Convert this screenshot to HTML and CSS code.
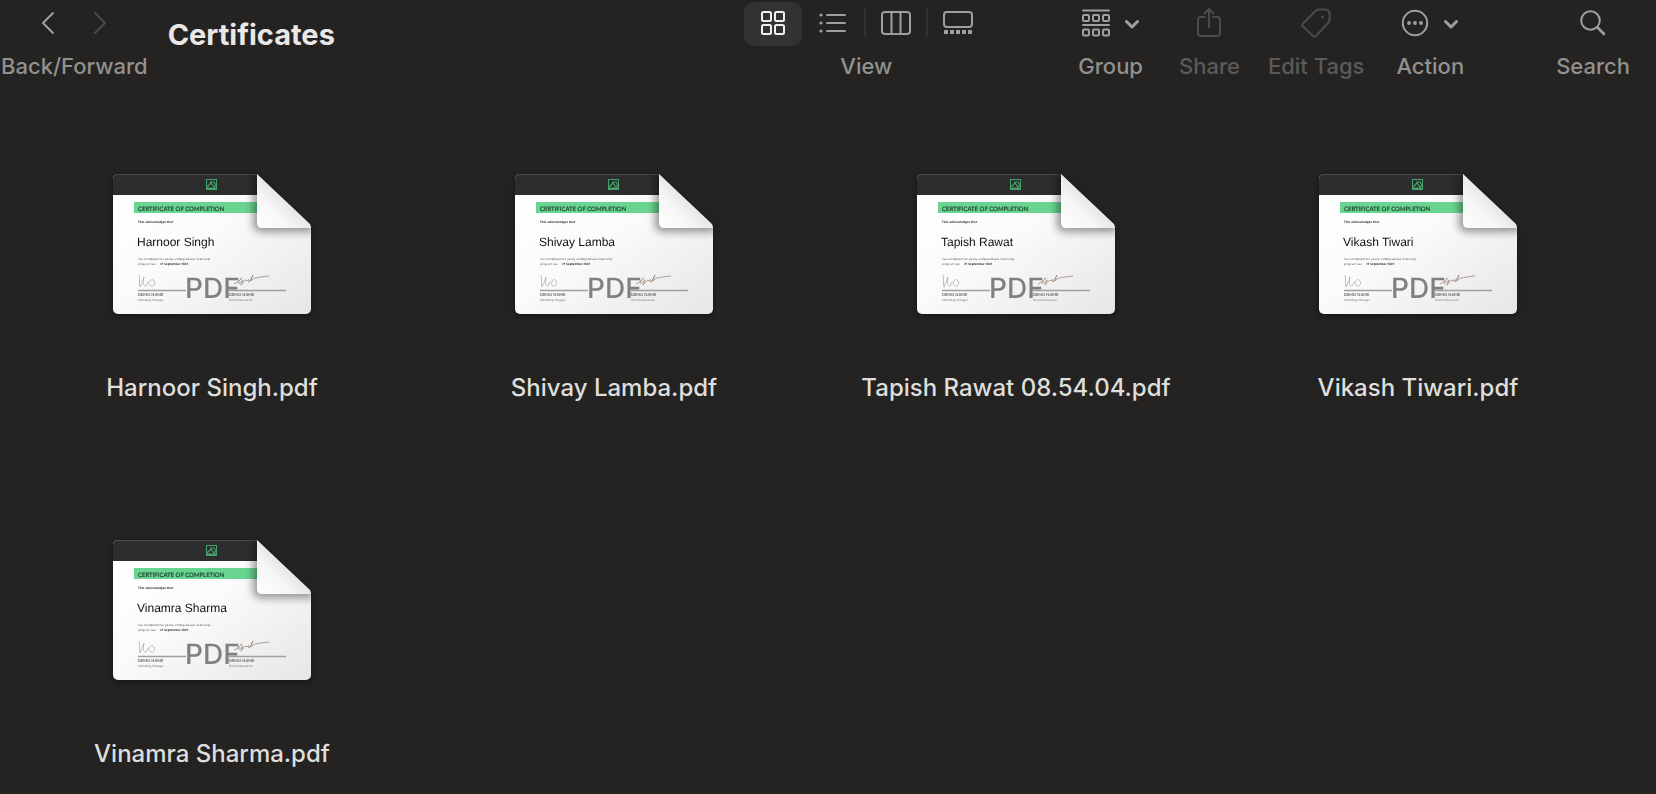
FILE: index.html
```
<!DOCTYPE html>
<html lang="en">
<head>
<meta charset="utf-8">
<title>Certificates</title>
<link rel="stylesheet" href="styles.css">
</head>
<body>
<svg class="defs" aria-hidden="true">
  <defs>
    <linearGradient id="paper" x1="0" y1="0" x2="1" y2="1"><stop offset="0" stop-color="#fff"/><stop offset=".45" stop-color="#fbfbfb"/><stop offset="1" stop-color="#e6e6e6"/></linearGradient>
    <linearGradient id="fold" x1="0" y1="1" x2=".55" y2=".45"><stop offset="0" stop-color="#fff"/><stop offset=".6" stop-color="#f6f6f6"/><stop offset="1" stop-color="#e4e4e4"/></linearGradient>
    <filter id="soft" x="-30%" y="-30%" width="160%" height="160%"><feGaussianBlur stdDeviation="4"/></filter>
    <clipPath id="sheet-clip"><path d="M5 0H144L198 54V135a5 5 0 0 1-5 5H5a5 5 0 0 1-5-5V5a5 5 0 0 1 5-5Z"/></clipPath>
    <symbol id="sheet" viewBox="0 0 198 140">
      <g clip-path="url(#sheet-clip)">
        <rect width="198" height="140" fill="url(#paper)"/>
        <rect width="198" height="21" fill="#2d2d2e"/>
        <rect width="198" height="1" fill="#4a4b48"/>
        <rect x="21" y="28" width="140" height="11" fill="#6ad591"/>
        <g fill="none" stroke="#45a06b"><rect x="93.500" y="5.500" width="10" height="10"/><path d="M94 13l4-4 3 4 2-2M97 8h4l2 3" stroke-width="1.200"/></g>
        <path d="M94 14.500h9" stroke="#45a06b" stroke-width="2"/>
        <path d="M25 116.500H73M116 116.500H173" stroke="#a0a0a0" stroke-width="1.500"/>
        <path d="M26 101c1 4 0 8 1 12 1-3 3-6 4-10-1 4-1 8 1 9s2-3 3-4 1 3 3 4 5-2 3-5-4-1-4 1" fill="none" stroke="#999" stroke-width=".6"/>
        <path d="M121 110c3-1 7-5 8-6s-5 4-4 5 4-2 5-3-3 6-2 5 4-5 5-5 0 2 2 0 0 3 1 2 4-7 4-7-3 7-2 6 3-3 4-3 4-1 14-2" fill="none" stroke="#8b776a" stroke-width=".7"/>
        <path d="M140 0H200V58H148q-8 0-8-8Z" fill="#000" opacity=".4" filter="url(#soft)"/>
      </g>
      <path d="M144 0L197 50Q198 52 198 54H149q-5 0-5-5Z" fill="url(#fold)"/>
    </symbol>
  </defs>
</svg>

<header class="toolbar">
  <div class="tool nav">
    <div class="controls">
      <button type="button" aria-label="Back"><svg width="16" height="26" viewBox="0 0 16 26"><path d="M13 3L3 13l10 10" stroke-width="2"/></svg></button>
      <button type="button" class="off" aria-label="Forward"><svg width="16" height="26" viewBox="0 0 16 26"><path d="M3 3l10 10L3 23" stroke-width="2"/></svg></button>
    </div>
    <span class="caption">Back/Forward</span>
  </div>
  <h1>Certificates</h1>
  <div class="tool view">
    <div class="segments">
      <button type="button" class="selected" aria-label="Icons"><svg width="24" height="24" viewBox="0 0 24 24"><rect x="1" y="1" width="9" height="9" rx="1.500"/><rect x="14" y="1" width="9" height="9" rx="1.500"/><rect x="1" y="14" width="9" height="9" rx="1.500"/><rect x="14" y="14" width="9" height="9" rx="1.500"/></svg></button>
      <button type="button" aria-label="List"><svg width="28" height="24" viewBox="0 0 28 24"><path d="M8 4h18M8 12h18M8 20h18"/><g class="solid"><circle cx="2" cy="4" r="1.600"/><circle cx="2" cy="12" r="1.600"/><circle cx="2" cy="20" r="1.600"/></g></svg></button>
      <button type="button" aria-label="Columns"><svg width="30" height="24" viewBox="0 0 30 24"><rect x="1" y="1" width="28" height="22" rx="3"/><path d="M10.500 1v22M19.500 1v22"/></svg></button>
      <button type="button" aria-label="Gallery"><svg width="30" height="24" viewBox="0 0 30 24"><rect x="1" y="1" width="28" height="15" rx="3"/><path class="solid" d="M1 19h4v4H1zM7 19h4v4H7zM13 19h4v4h-4zM19 19h4v4h-4zM25 19h4v4h-4z"/></svg></button>
    </div>
    <span class="caption">View</span>
  </div>
  <div class="actions">
    <button type="button" class="tool group">
      <span class="controls menu"><svg width="28" height="28" viewBox="0 0 28 28"><path d="M1 1.500h26M1 16h26"/><g><rect x="1" y="6" width="6" height="6" rx="1"/><rect x="11" y="6" width="6" height="6" rx="1"/><rect x="21" y="6" width="6" height="6" rx="1"/><rect x="1" y="20.500" width="6" height="6" rx="1"/><rect x="11" y="20.500" width="6" height="6" rx="1"/><rect x="21" y="20.500" width="6" height="6" rx="1"/></g></svg><svg class="chevron" width="16" height="12" viewBox="0 0 16 12"><path d="M2.500 4.500L8 10l5.500-5.500" stroke-width="3"/></svg></span>
      <span class="caption">Group</span>
    </button>
    <button type="button" class="tool off" disabled>
      <span class="controls"><svg width="24" height="32" viewBox="0 0 24 32"><path d="M8 10H4a3 3 0 0 0-3 3v13a3 3 0 0 0 3 3h16a3 3 0 0 0 3-3V13a3 3 0 0 0-3-3h-4M12 20V2M7.500 6.500L12 2l4.500 4.500"/></svg></span>
      <span class="caption">Share</span>
    </button>
    <button type="button" class="tool off" disabled>
      <span class="controls"><svg width="30" height="30" viewBox="0 0 30 30"><path d="M17.500 1.500H25q3.500 1 3.500 4V12q0 1.500-1 2.500L15 28q-1.500 1.500-3 0L2 18.500q-1.500-1.500 0-3L15 2.500q1-1 2.500-1Z"/><circle class="solid" cx="21.500" cy="9" r="1.500"/></svg></span>
      <span class="caption">Edit Tags</span>
    </button>
    <button type="button" class="tool action">
      <span class="controls menu"><svg width="28" height="28" viewBox="0 0 28 28"><circle cx="14" cy="14" r="12.200"/><g class="solid"><circle cx="8" cy="14" r="1.900"/><circle cx="14" cy="14" r="1.900"/><circle cx="20" cy="14" r="1.900"/></g></svg><svg class="chevron" width="16" height="12" viewBox="0 0 16 12"><path d="M2.500 4.500L8 10l5.500-5.500" stroke-width="3"/></svg></span>
      <span class="caption">Action</span>
    </button>
    <button type="button" class="tool search">
      <span class="controls"><svg width="26" height="26" viewBox="0 0 26 26"><circle cx="10.500" cy="10.500" r="9.300"/><path d="M17.500 17.500l6.500 6.500" stroke-width="2.600"/></svg></span>
      <span class="caption">Search</span>
    </button>
  </div>
</header>

<main class="files">
  <figure class="file">
    <svg class="thumb" viewBox="0 0 198 140" width="198" height="140">
      <use href="#sheet"/>
      <text class="heading" x="25" y="37">CERTIFICATE OF COMPLETION</text><text class="fine strong" x="25" y="49">This acknowledges that</text>
      <text class="name" x="24" y="72">Harnoor Singh</text>
      <text class="fine" x="25" y="86">has completed our yearly undergraduate internship</text><text class="fine" x="25" y="91">program last</text><text class="fine strong" x="47" y="91">21 September 2022</text>
      <text class="sign" x="25" y="122">DEMO NAME</text><text class="role" x="25" y="127">Marketing Manager</text>
      <text class="sign" x="116" y="122">DEMO NAME</text><text class="role" x="116" y="127">Human Resources</text>
      <text class="kind" x="72" y="124">PDF</text>
    </svg>
    <figcaption>Harnoor Singh.pdf</figcaption>
  </figure>
  <figure class="file">
    <svg class="thumb" viewBox="0 0 198 140" width="198" height="140">
      <use href="#sheet"/>
      <text class="heading" x="25" y="37">CERTIFICATE OF COMPLETION</text><text class="fine strong" x="25" y="49">This acknowledges that</text>
      <text class="name" x="24" y="72">Shivay Lamba</text>
      <text class="fine" x="25" y="86">has completed our yearly undergraduate internship</text><text class="fine" x="25" y="91">program last</text><text class="fine strong" x="47" y="91">21 September 2022</text>
      <text class="sign" x="25" y="122">DEMO NAME</text><text class="role" x="25" y="127">Marketing Manager</text>
      <text class="sign" x="116" y="122">DEMO NAME</text><text class="role" x="116" y="127">Human Resources</text>
      <text class="kind" x="72" y="124">PDF</text>
    </svg>
    <figcaption>Shivay Lamba.pdf</figcaption>
  </figure>
  <figure class="file">
    <svg class="thumb" viewBox="0 0 198 140" width="198" height="140">
      <use href="#sheet"/>
      <text class="heading" x="25" y="37">CERTIFICATE OF COMPLETION</text><text class="fine strong" x="25" y="49">This acknowledges that</text>
      <text class="name" x="24" y="72">Tapish Rawat</text>
      <text class="fine" x="25" y="86">has completed our yearly undergraduate internship</text><text class="fine" x="25" y="91">program last</text><text class="fine strong" x="47" y="91">21 September 2022</text>
      <text class="sign" x="25" y="122">DEMO NAME</text><text class="role" x="25" y="127">Marketing Manager</text>
      <text class="sign" x="116" y="122">DEMO NAME</text><text class="role" x="116" y="127">Human Resources</text>
      <text class="kind" x="72" y="124">PDF</text>
    </svg>
    <figcaption>Tapish Rawat 08.54.04.pdf</figcaption>
  </figure>
  <figure class="file">
    <svg class="thumb" viewBox="0 0 198 140" width="198" height="140">
      <use href="#sheet"/>
      <text class="heading" x="25" y="37">CERTIFICATE OF COMPLETION</text><text class="fine strong" x="25" y="49">This acknowledges that</text>
      <text class="name" x="24" y="72">Vikash Tiwari</text>
      <text class="fine" x="25" y="86">has completed our yearly undergraduate internship</text><text class="fine" x="25" y="91">program last</text><text class="fine strong" x="47" y="91">21 September 2022</text>
      <text class="sign" x="25" y="122">DEMO NAME</text><text class="role" x="25" y="127">Marketing Manager</text>
      <text class="sign" x="116" y="122">DEMO NAME</text><text class="role" x="116" y="127">Human Resources</text>
      <text class="kind" x="72" y="124">PDF</text>
    </svg>
    <figcaption>Vikash Tiwari.pdf</figcaption>
  </figure>
  <figure class="file">
    <svg class="thumb" viewBox="0 0 198 140" width="198" height="140">
      <use href="#sheet"/>
      <text class="heading" x="25" y="37">CERTIFICATE OF COMPLETION</text><text class="fine strong" x="25" y="49">This acknowledges that</text>
      <text class="name" x="24" y="72">Vinamra Sharma</text>
      <text class="fine" x="25" y="86">has completed our yearly undergraduate internship</text><text class="fine" x="25" y="91">program last</text><text class="fine strong" x="47" y="91">21 September 2022</text>
      <text class="sign" x="25" y="122">DEMO NAME</text><text class="role" x="25" y="127">Marketing Manager</text>
      <text class="sign" x="116" y="122">DEMO NAME</text><text class="role" x="116" y="127">Human Resources</text>
      <text class="kind" x="72" y="124">PDF</text>
    </svg>
    <figcaption>Vinamra Sharma.pdf</figcaption>
  </figure>
</main>
</body>
</html>
```

FILE: styles.css
```
* { box-sizing: border-box; }

body {
  margin: 0;
  background: #242321;
  color: #dededc;
  font-family: Inter, "Liberation Sans", sans-serif;
  font-weight: 500;
}

.defs { position: absolute; width: 0; height: 0; }

button {
  border: 0;
  padding: 0;
  background: none;
  color: inherit;
  font: inherit;
}

/* Toolbar */
.toolbar {
  display: grid;
  grid-template-columns: auto 1fr auto auto;
  padding: 2px 26px 0 1px;
  color: #a09f9d;
}

.toolbar h1 {
  margin: 13px 0 0 20px;
  color: #e9e8e7;
  font-size: 29px;
  line-height: 40px;
  font-weight: 700;
}

.tool {
  display: flex;
  flex-direction: column;
  align-items: center;
}

.controls,
.segments {
  display: flex;
  align-items: center;
  justify-content: center;
  height: 44px;
}

.controls,
.segments button { padding-bottom: 2px; }

.caption {
  font-size: 22px;
  line-height: 40px;
  color: #92918f;
  white-space: nowrap;
}

.toolbar svg {
  display: block;
  fill: none;
  stroke: currentColor;
  stroke-width: 2;
  stroke-linecap: round;
  stroke-linejoin: round;
}

.toolbar .solid { fill: currentColor; stroke: none; }

.nav .controls { gap: 36px; }

.off { color: #4c4b49; }
.off .caption { color: #5b5a58; }

.view { margin-right: 90px; }

.segments button {
  display: flex;
  align-items: center;
  justify-content: center;
  width: 62px;
  height: 44px;
}

.segments .selected {
  width: 58px;
  border-radius: 10px;
  background: #333230;
  color: #f0efee;
}

.segments button + button + button::before {
  content: "";
  width: 2px;
  height: 28px;
  margin-right: 15px;
  background: #33322f;
}

.segments button + button + button { padding-right: 15px; }

.actions { display: flex; gap: 28px; }

.menu { gap: 14px; }

.group { margin-right: 8px; }
.action { margin-left: 4px; }
.search { margin-left: 64px; }

/* File grid */
.files {
  display: grid;
  grid-template-columns: repeat(4, 1fr);
  row-gap: 136px;
  padding: 88px 37px 20px 11px;
}

.file {
  display: flex;
  flex-direction: column;
  align-items: center;
  gap: 58px;
  margin: 0;
}

.thumb {
  display: block;
  filter: drop-shadow(0 2px 3px rgba(0, 0, 0, 0.4));
  text-rendering: geometricPrecision;
}

.file figcaption {
  font-size: 24px;
  line-height: 32px;
  white-space: nowrap;
}

.heading { font: 400 6px Lato, sans-serif; fill: #1f4632; stroke: #1f4632; stroke-width: 0.2px; }
.name { font: 12px "Liberation Sans", Arial, sans-serif; fill: #111; }
.fine { font: 3px "Open Sans", sans-serif; fill: #555; }
.strong { font-weight: 700; fill: #333; }
.sign { font: 700 4px Lato, sans-serif; fill: #666; }
.role { font: 3px Lato, sans-serif; fill: #777; }
.kind { font: 500 28px Inter, sans-serif; fill: #808080; }
```
